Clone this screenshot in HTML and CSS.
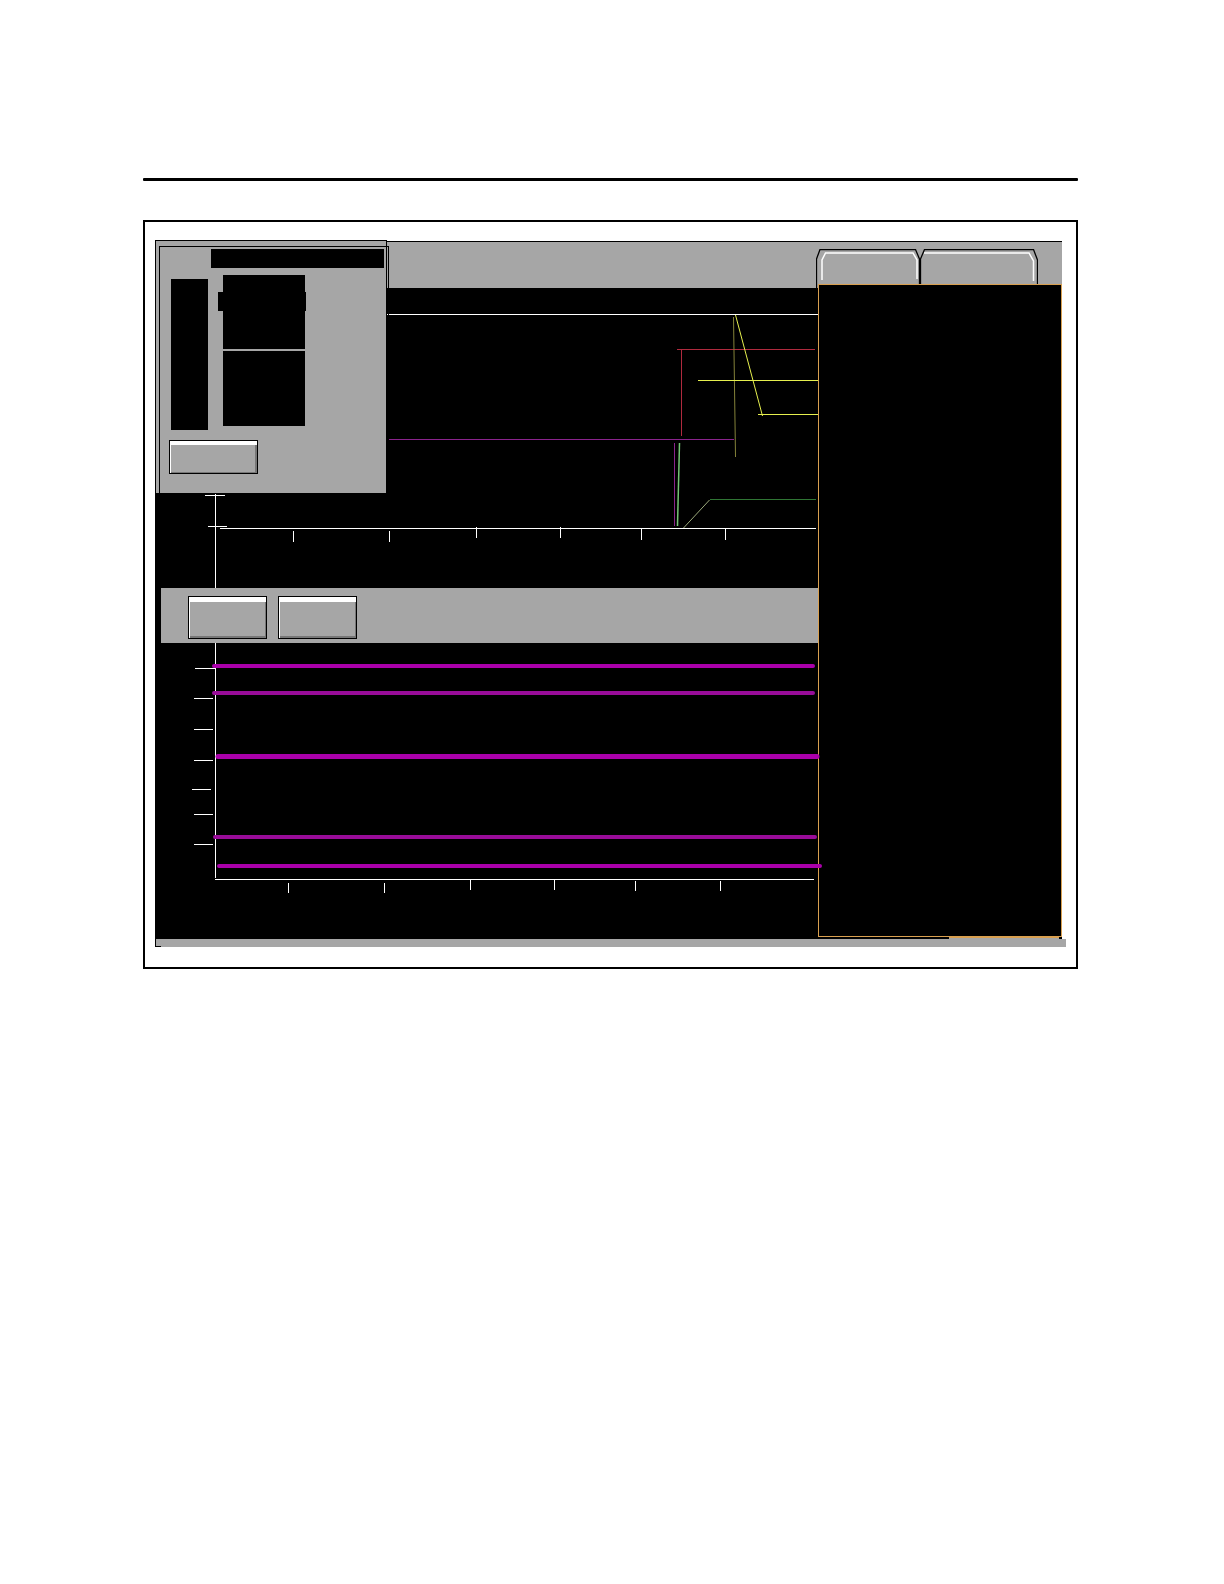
FILE: index.html
```
<!DOCTYPE html>
<html lang="en">
<head>
  <meta charset="UTF-8" />
  <meta name="viewport" content="width=device-width, initial-scale=1.0"/>
  <title>Trend Display</title>
  <link rel="stylesheet" href="styles.css">
</head>
<body>
  <main class="page">
    <hr class="rule">

    <div class="frame">
      <div class="screen">
        <div class="topbar">
          <button class="tab tab-first" aria-label="First tab">
            <svg width="104" height="39" viewBox="0 0 104 39">
              <path class="edge" d="M.5 39V10L4 .5H99.500L103.500 10V36"/>
              <path class="shine" d="M6 31V11L9.500 4H97L101 11V30"/>
            </svg>
          </button>
          <button class="tab tab-second" aria-label="Second tab">
            <svg width="118" height="39" viewBox="0 0 118 39">
              <path class="edge" d="M.5 36V10L4.500 .5H113.500L117.500 11V36"/>
              <path class="shine" d="M4 4H109L113.500 12V32"/>
            </svg>
          </button>
        </div>

        <div class="content">
          <div class="charts">
            <svg class="chart upper" viewBox="0 0 663 300" preserveAspectRatio="none">
              <path class="axis" d="M232 26.500H663M65 240.500H661M60.500 206V300M50 207.500H70M53 238.500H72"/>
              <path class="axis" d="M138.500 243v11M234.500 243v11M321.500 239v11M405.500 239v11M486.500 241v11M570.500 241v11"/>
              <path class="violet" d="M234 151.500H579M519.500 155V238"/>
              <path class="red" d="M522 61.500H660M526.500 62V148"/>
              <path class="olive" d="M578.500 29L580.500 169"/>
              <path class="yellow" d="M543 92.500H663M603 126.500H663"/>
              <path class="yellow slope" d="M580.500 27L607.500 128"/>
              <path class="lime" d="M524.500 155L522.500 238"/>
              <path class="sage" d="M528.500 240L554.500 212"/>
              <path class="green" d="M555 211.500H661"/>
            </svg>

            <div class="toolbar">
              <button class="key" aria-label="Previous"></button>
              <button class="key" aria-label="Next"></button>
            </div>

            <svg class="chart lower" viewBox="0 0 663 296" preserveAspectRatio="none">
              <path class="axis" d="M60.500 0V235M60 236.500H659"/>
              <path class="axis" d="M40 25.500h20M39 55.500h19M39 86.500h19M39 117.500h19M37 146.500h19M39 171.500h19M39 201.500h19"/>
              <path class="axis" d="M133.500 240v10M229.500 240v10M315.500 237v10M399.500 237v10M480.500 238v10M565.500 238v10"/>
              <path class="limit" d="M59 23H658M64 223H665"/>
              <path class="limit dim" d="M59 50H658M60 194H660"/>
              <path class="limit mid" d="M63 113.500H662"/>
            </svg>
          </div>

          <div class="side"></div>
        </div>

        <div class="statusbar"></div>

        <section class="dialog">
          <div class="dialog-title"></div>
          <div class="dialog-row">
            <div class="names"></div>
            <div class="values">
              <div class="value"></div>
              <div class="value"></div>
            </div>
          </div>
          <button class="key small" aria-label="Close"></button>
        </section>
      </div>
    </div>
  </main>
</body>
</html>
```
FILE: styles.css
```
*,
*::before,
*::after {
  box-sizing: border-box;
}

body {
  margin: 0;
  background: #fff;
  font-family: "Liberation Sans", sans-serif;
}

button {
  padding: 0;
  border: none;
  background: none;
}

.page {
  padding: 178px 146px 0 143px;
}

.rule {
  height: 3px;
  margin: 0 0 39px;
  border: none;
  border-radius: 1px;
  background: #000;
}

.frame {
  padding: 18px 10px 20px;
  border: 2px solid #000;
}

.screen {
  position: relative;
  padding-top: 1px;
}

.topbar {
  display: flex;
  justify-content: flex-end;
  height: 47px;
  margin-right: 4px;
  padding: 7px 24px 0 0;
  border-top: 1px solid #000;
  background: #a6a6a6;
}

.tab {
  height: 39px;
}

.tab svg {
  display: block;
  fill: none;
}

.edge {
  stroke: #000;
  stroke-width: 1.3;
}

.shine {
  stroke: #fff;
  stroke-width: 1.5;
}

.content {
  display: flex;
  margin-right: 4px;
  background: #000;
}

.charts {
  flex: 1;
  min-width: 0;
}

.chart {
  display: block;
  position: relative;
  z-index: 1;
  width: 100%;
  overflow: visible;
  fill: none;
  shape-rendering: crispEdges;
}

.upper {
  height: 300px;
}

.lower {
  height: 296px;
}

.axis {
  stroke: #fff;
}

.violet {
  stroke: #8a238c;
}

.red {
  stroke: #b02a3e;
}

.olive {
  stroke: #85833a;
}

.yellow {
  stroke: #e6f04e;
}

.olive,
.slope,
.lime,
.sage {
  shape-rendering: auto;
}

.lime {
  stroke: #74c474;
  stroke-width: 1.5;
}

.sage {
  stroke: #9caa7c;
}

.green {
  stroke: #2f7534;
}

.limit {
  stroke: #aa00aa;
  stroke-width: 4;
  stroke-linecap: round;
  shape-rendering: auto;
}

.dim {
  stroke: #980c98;
}

.mid {
  stroke-width: 5;
}

.toolbar {
  display: flex;
  gap: 11px;
  height: 55px;
  margin-left: 6px;
  padding: 8px 27px;
  background: #a6a6a6;
}

/* raised push button */
.key {
  width: 79px;
  height: 43px;
  border: 1px solid #000;
  background: #a6a6a6;
  box-shadow: inset 1px 5px #fff, inset -1px -2px #777;
}

.small {
  display: block;
  width: 89px;
  height: 34px;
  margin: 10px 0 0 13px;
  box-shadow: inset 1px 4px #fff, inset -2px -1px #777;
}

.side {
  position: relative;
  width: 244px;
  margin: -4px 0 2px;
  border: 1px solid #d9a050;
  background: #000;
}

.statusbar {
  position: relative;
  height: 8px;
  border-left: 1px solid #000;
  background: #a6a6a6;
}

/* highlighted end of the status bar */
.statusbar::before {
  content: "";
  position: absolute;
  top: -3px;
  right: 7px;
  width: 110px;
  height: 3px;
  border-top: 2px solid #d9a050;
  background: #a6a6a6;
}

.statusbar::after {
  content: "";
  position: absolute;
  left: 0;
  bottom: 0;
  width: 5px;
  height: 1px;
  background: #000;
}

.dialog {
  position: absolute;
  top: 0;
  left: 0;
  z-index: 2;
  width: 232px;
  height: 253px;
  padding-top: 8px;
  border: 1px solid #000;
  border-bottom: none;
  background: #a6a6a6;
}

.dialog::before {
  content: "";
  position: absolute;
  top: 5px;
  left: 3px;
  width: 230px;
  bottom: 0;
  border: 1px solid #000;
  border-bottom: none;
}

.dialog-title {
  height: 19px;
  margin: 0 2px 7px 55px;
  background: #000;
}

.dialog-row {
  display: flex;
  gap: 15px;
  padding-left: 15px;
}

.names {
  width: 37px;
  height: 151px;
  margin-top: 4px;
  background: #000;
}

.values {
  position: relative;
  display: grid;
  grid-template-rows: 74px 75px;
  gap: 2px;
  width: 82px;
  height: 151px;
}

.value {
  background: #000;
}

/* selected value */
.values::before {
  content: "";
  position: absolute;
  top: 17px;
  left: -5px;
  width: 88px;
  height: 19px;
  background: #000;
}
```
